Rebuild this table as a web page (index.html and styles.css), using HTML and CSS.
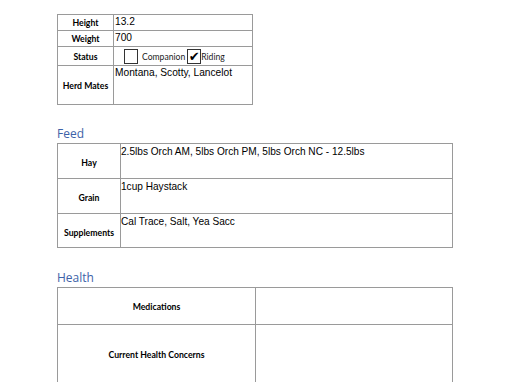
FILE: index.html
```html
<!DOCTYPE html>
<html>
<head>
<meta charset="utf-8">
<link rel="stylesheet" href="styles.css">
</head>
<body>
<div class="page">
  <table class="grid t1">
    <tr class="r16"><th class="lab1">Height</th><td class="val">13.2</td></tr>
    <tr class="r16"><th class="lab1">Weight</th><td class="val">700</td></tr>
    <tr class="r19"><th class="lab1">Status</th><td class="status">
      <span class="box"></span><span class="opt">Companion</span><span class="box checked">✔</span><span class="opt">Riding</span>
    </td></tr>
    <tr class="r39"><th class="lab1">Herd Mates</th><td class="val">Montana, Scotty, Lancelot</td></tr>
  </table>

  <h2 class="head feed-head">Feed</h2>
  <table class="grid t2">
    <tr class="r35"><th class="lab2">Hay</th><td class="val2">2.5lbs Orch AM, 5lbs Orch PM, 5lbs Orch NC - 12.5lbs</td></tr>
    <tr class="r35"><th class="lab2">Grain</th><td class="val2">1cup Haystack</td></tr>
    <tr class="r34"><th class="lab2">Supplements</th><td class="val2">Cal Trace, Salt, Yea Sacc</td></tr>
  </table>

  <h2 class="head health-head">Health</h2>
  <table class="grid t3">
    <tr class="r37"><th class="lab3">Medications</th><td></td></tr>
    <tr class="r60"><th class="lab3">Current Health Concerns</th><td></td></tr>
  </table>
</div>
</body>
</html>
```

FILE: styles.css
```css
html, body {
  margin: 0;
  padding: 0;
  background: #ffffff;
  overflow: hidden;
}
.page {
  padding: 14px 0 0 57px;
  font-family: "Liberation Sans", Arial, sans-serif;
  color: #000;
}
.grid {
  border-collapse: collapse;
  table-layout: fixed;
}
.grid th, .grid td {
  border: 1px solid #9a9a9a;
  padding: 0;
  box-sizing: border-box;
}
.t1 { width: 196px; }
.t1 th { width: 56px; }
.t2 { width: 396px; }
.t2 th { width: 63px; }
.t3 { width: 396px; }
.t3 th { width: 198px; }

.r16 { height: 16px; }
.r19 { height: 19px; }
.r39 { height: 39px; }
.r35 { height: 35px; }
.r34 { height: 34px; }
.r37 { height: 37px; }
.r60 { height: 60px; }

.grid .lab1, .grid .lab2, .grid .lab3 {
  font-family: Lato, "Open Sans", sans-serif;
  font-weight: 700;
  font-size: 8.7px;
  text-align: center;
  vertical-align: middle;
  color: #000;
}
.grid .lab2 { padding-top: 3px; }

.grid .val {
  font-size: 10.2px;
  vertical-align: top;
  padding: 1px 0 0 1px;
  line-height: 12px;
}
.grid .val2 {
  font-size: 10.1px;
  vertical-align: top;
  padding: 2px 0 0 0;
  line-height: 12px;
}
.grid .status {
  vertical-align: middle;
  padding: 1px 0 0 10px;
  font-size: 0;
  white-space: nowrap;
}
.box {
  display: inline-block;
  width: 14px;
  height: 15px;
  border: 1px solid #333;
  vertical-align: middle;
  box-sizing: border-box;
  font-size: 13px;
  font-weight: 700;
  line-height: 14px;
  text-align: center;
  color: #000;
  font-family: "DejaVu Sans", sans-serif;
}
.opt {
  display: inline-block;
  font-family: Lato, "Open Sans", sans-serif;
  font-size: 8.6px;
  vertical-align: middle;
  margin-left: 4px;
  color: #222;
}
.opt + .box { margin-left: 2px; }
.box.checked + .opt { margin-left: 0; }

.head {
  font-family: "Open Sans", "Noto Sans", sans-serif;
  font-weight: 400;
  font-size: 12px;
  color: #3d62a8;
  margin: 0;
  line-height: 16px;
}
.feed-head { margin-top: 21px; margin-bottom: 1px; }
.health-head { margin-top: 22px; margin-bottom: 1px; }
```
